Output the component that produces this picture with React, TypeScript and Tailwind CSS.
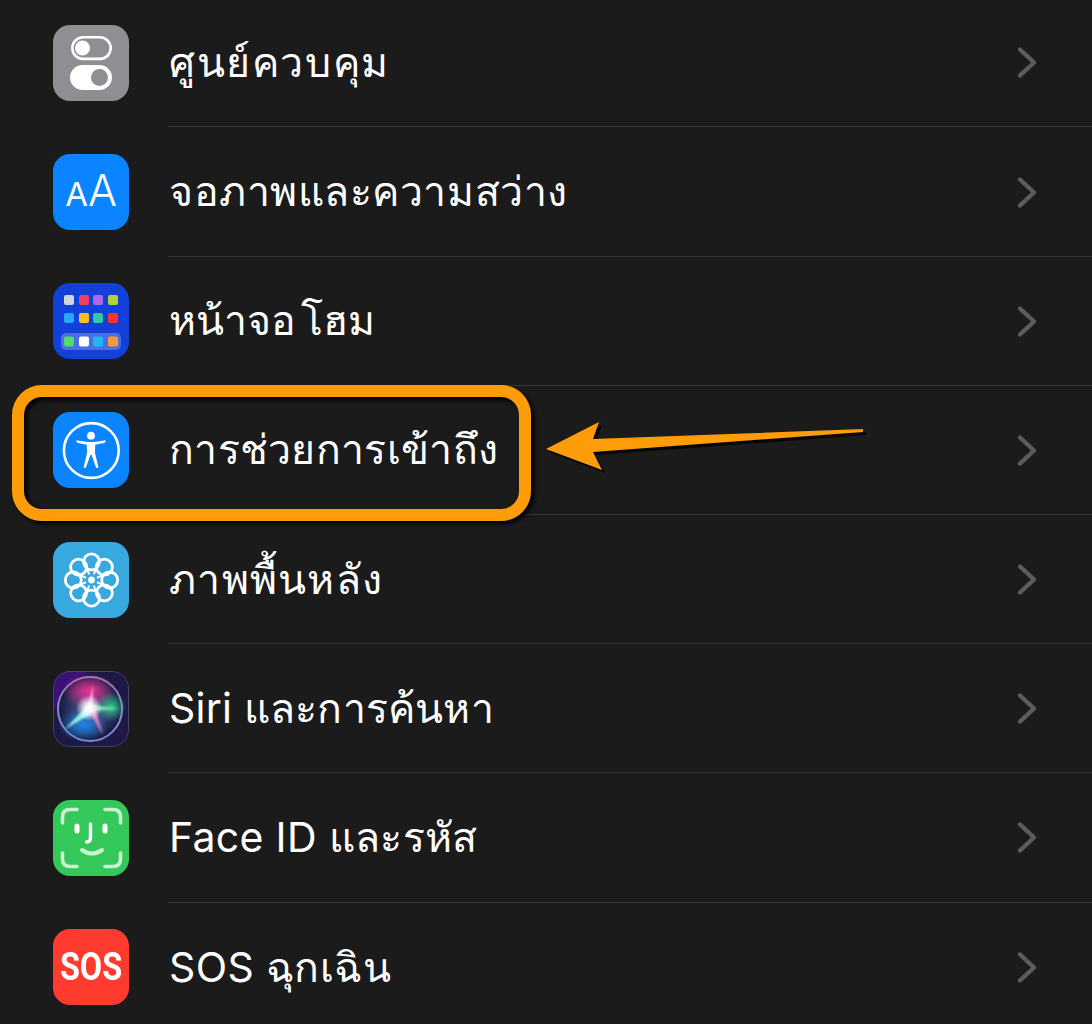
import React from "react";

const Toggle = () => (
  <svg viewBox="0 0 76 76" className="w-full h-full">
    <rect x="19.3" y="12.3" width="38.4" height="21.6" rx="10.8" fill="none" stroke="#fff" strokeWidth="2.6" />
    <circle cx="29.5" cy="23" r="7.5" fill="#fff" />
    <rect x="17" y="40" width="42" height="25" rx="12.5" fill="#fff" />
    <circle cx="46.5" cy="52.5" r="8.5" fill="#8e8e93" />
  </svg>
);

const AA = () => (
  <div className="w-full h-full flex items-baseline justify-center pt-[15px] text-white font-normal font-['Inter','Liberation_Sans',sans-serif] leading-none">
    <span className="text-[33px]">A</span>
    <span className="text-[43px] font-light">A</span>
  </div>
);

const homeDots = [
  [11, 12, "#d3d6d8"], [26, 12, "#f4405e"], [40, 12, "#a86bf0"], [55, 12, "#b6d23a"],
  [11, 30, "#23a9f6"], [26, 30, "#fbbd2c"], [40, 30, "#2fc9a9"], [55, 30, "#f9332f"],
];
const dockDots = [
  [11, "#4fdc6c"], [26, "#ffffff"], [40, "#22b6f6"], [55, "#f79a3c"],
];

const Home = () => (
  <svg viewBox="0 0 76 76" className="w-full h-full">
    {homeDots.map(([x, y, c]) => (
      <rect key={`${x}-${y}`} x={x as number} y={y as number} width="10" height="10" rx="2" fill={c as string} />
    ))}
    <rect x="8" y="50" width="60" height="17" rx="5" fill="#4a6fe0" />
    {dockDots.map(([x, c]) => (
      <rect key={x as number} x={x as number} y="53.5" width="10" height="10" rx="2" fill={c as string} />
    ))}
  </svg>
);

const Access = () => (
  <svg viewBox="0 0 76 76" className="w-full h-full">
    <circle cx="38.3" cy="38.5" r="27.4" fill="none" stroke="#fff" strokeWidth="2.6" />
    <circle cx="38" cy="23.7" r="3.9" fill="#fff" />
    <path
      d="M23.5 29.6 C 23.2 28.6 23.8 28.2 24.8 28.4 L 35 30 L 41 30 L 51.2 28.4 C 52.2 28.2 52.8 28.6 52.5 29.6 C 52.2 30.6 51.6 30.9 50.8 31 L 42.2 32.8 L 42 41 L 45.5 55.6 L 43.2 56 L 38.6 43 L 37.4 43 L 32.8 56 L 30.5 55.6 L 34 41 L 33.8 32.8 L 25.2 31 C 24.4 30.9 23.8 30.6 23.5 29.6 Z"
      fill="#fff"
    />
  </svg>
);

const Flower = () => (
  <svg viewBox="0 0 76 76" className="w-full h-full" fill="none" stroke="#fff" strokeWidth="2.8">
    {[0, 45, 90, 135, 180, 225, 270, 315].map((a) => (
      <g key={a} transform={`rotate(${a} 38.5 38)`}>
        <circle cx="38.5" cy="19.8" r="8" />
        <path d="M38.5 32 L38.5 24" strokeWidth="2" transform="rotate(22.5 38.5 38)" />
      </g>
    ))}
    <circle cx="38.5" cy="38" r="3.4" fill="#fff" stroke="none" />
  </svg>
);

const Siri = () => (
  <svg viewBox="0 0 76 76" className="w-full h-full">
    <defs>
      <radialGradient id="sb" cx="50%" cy="50%" r="50%">
        <stop offset="0%" stopColor="#5b5f9e" />
        <stop offset="100%" stopColor="#101a3e" />
      </radialGradient>
      <radialGradient id="sm" cx="50%" cy="50%" r="50%">
        <stop offset="0%" stopColor="#ef2f93" stopOpacity="1" />
        <stop offset="100%" stopColor="#ef2f93" stopOpacity="0" />
      </radialGradient>
      <radialGradient id="sg" cx="50%" cy="50%" r="50%">
        <stop offset="0%" stopColor="#30c98c" stopOpacity="1" />
        <stop offset="100%" stopColor="#30c98c" stopOpacity="0" />
      </radialGradient>
      <radialGradient id="sc" cx="50%" cy="50%" r="50%">
        <stop offset="0%" stopColor="#1c86e8" stopOpacity="1" />
        <stop offset="100%" stopColor="#1c86e8" stopOpacity="0" />
      </radialGradient>
      <radialGradient id="sw" cx="50%" cy="50%" r="50%">
        <stop offset="0%" stopColor="#ffffff" />
        <stop offset="35%" stopColor="#ffffff" stopOpacity="0.85" />
        <stop offset="100%" stopColor="#ffffff" stopOpacity="0" />
      </radialGradient>
      <filter id="sf"><feGaussianBlur stdDeviation="1" /></filter>
    </defs>
    <rect width="76" height="76" fill="#1c1a44" />
    <path d="M0 0 H38 Q10 8 3 38 H0 Z" fill="#3b1175" />
    <rect x="0.5" y="0.5" width="75" height="75" rx="16.5" fill="none" stroke="#474268" />
    <circle cx="37" cy="38" r="32" fill="url(#sb)" stroke="#8d84c8" strokeWidth="2" />
    <ellipse cx="36" cy="20" rx="27" ry="18" fill="url(#sm)" />
    <ellipse cx="58" cy="36" rx="15" ry="15" fill="url(#sg)" />
    <ellipse cx="30" cy="54" rx="25" ry="17" fill="url(#sc)" />
    <g filter="url(#sf)">
      <path d="M36 33 L66 38 L40 40 Z" fill="#7be0ae" />
      <path d="M34 35 L12 58 L40 42 Z" fill="#8ff0e0" />
      <path d="M35 38 L50 64 L41 34 Z" fill="#f07ac0" />
      <path d="M34 38 L40 14 L40 38 Z" fill="#f5a0d8" />
    </g>
    <circle cx="36" cy="37" r="13" fill="url(#sw)" />
  </svg>
);

const Face = () => (
  <svg viewBox="0 0 76 76" className="w-full h-full" fill="none" stroke="#c9f2d2" strokeWidth="3.6" strokeLinecap="round">
    <path d="M9.5 23 V17 Q9.5 9.5 17 9.5 H24" />
    <path d="M52 9.5 H60 Q67.5 9.5 67.5 17 V23" />
    <path d="M9.5 53 V59 Q9.5 66.5 17 66.5 H24" />
    <path d="M52 66.5 H60 Q67.5 66.5 67.5 59 V53" />
    <path d="M24 26 V31 M52 26 V31" strokeWidth="5" stroke="#fff" />
    <path d="M37.5 24 V38 Q37.5 42 33.5 42" stroke="#fff" strokeWidth="3.4" />
    <path d="M29 50 Q39 57 49 50" strokeWidth="4" />
  </svg>
);

const Sos = () => (
  <div className="w-full h-full flex items-center justify-center text-white font-bold text-[39px] leading-none scale-x-[0.83] font-['Roboto','Liberation_Sans',sans-serif]">
    SOS
  </div>
);

const rows: { label: string; bg: string; icon: React.ReactNode; cls: string }[] = [
  { label: "ศูนย์ควบคุม", bg: "bg-[#8e8e93]", icon: <Toggle />, cls: "tracking-[1.6px]" },
  { label: "จอภาพและความสว่าง", bg: "bg-[#0a84ff]", icon: <AA />, cls: "tracking-[0.55px]" },
  { label: "หน้าจอ โฮม", bg: "bg-[#1340d8]", icon: <Home />, cls: "[word-spacing:-7px]" },
  { label: "การช่วยการเข้าถึง", bg: "bg-[#0a84ff]", icon: <Access />, cls: "tracking-[0.3px]" },
  { label: "ภาพพื้นหลัง", bg: "bg-[#38a9de]", icon: <Flower />, cls: "tracking-[1.3px]" },
  { label: "Siri และการค้นหา", bg: "bg-[#241a4e]", icon: <Siri />, cls: "tracking-[0.2px]" },
  { label: "Face ID และรหัส", bg: "bg-[#34c759]", icon: <Face />, cls: "tracking-[0.3px]" },
  { label: "SOS ฉุกเฉิน", bg: "bg-[#ff3b30]", icon: <Sos />, cls: "tracking-[0.4px]" },
];

const Chevron = () => (
  <svg width="22" height="32" viewBox="0 0 22 32" fill="none" stroke="#5c5c60" strokeWidth="4.4" strokeLinecap="round" strokeLinejoin="round" className="translate-y-[0.5px]">
    <path d="M4 3 L18 16 L4 29" />
  </svg>
);

export default function App() {
  return (
    <div className="relative h-[1024px] w-[1092px] overflow-hidden bg-[#1b1b1c] font-['Inter','Noto_Sans','DejaVu_Sans',sans-serif] text-white">
      <div className="flex flex-col mt-[-1.75px]">
        {rows.map((r, i) => (
          <div key={r.label} className="flex h-[129.2px] items-center pl-[53px]">
            <div className={`h-[76px] w-[76px] shrink-0 overflow-hidden rounded-[17px] ${r.bg}`}>{r.icon}</div>
            <div className={`ml-[39px] flex h-full flex-1 items-center justify-between pl-[1px] pr-[54px] ${i < rows.length - 1 ? "border-b border-[#333335]" : ""}`}>
              <span className={`text-[41px] leading-none whitespace-nowrap ${r.cls}`}>{r.label}</span>
              <Chevron />
            </div>
          </div>
        ))}
      </div>
      <div className="absolute left-[12px] top-[385px] h-[136px] w-[519px] rounded-[30px] border-[12px] border-[#ff9c0a] shadow-[3px_3px_4px_#000,inset_3px_3px_4px_#000]" />
      <svg className="absolute left-[540px] top-[415px]" width="330" height="62" viewBox="540 415 330 62">
        <path d="M546 449 L599 422 L593 439 L863 429 L863 432 L593 452 L602 470 Z" fill="#000" opacity="0.75" transform="translate(3 3)" />
        <path d="M546 449 L599 422 L593 439 L863 429 L863 432 L593 452 L602 470 Z" fill="#ff9c0a" />
      </svg>
    </div>
  );
}
